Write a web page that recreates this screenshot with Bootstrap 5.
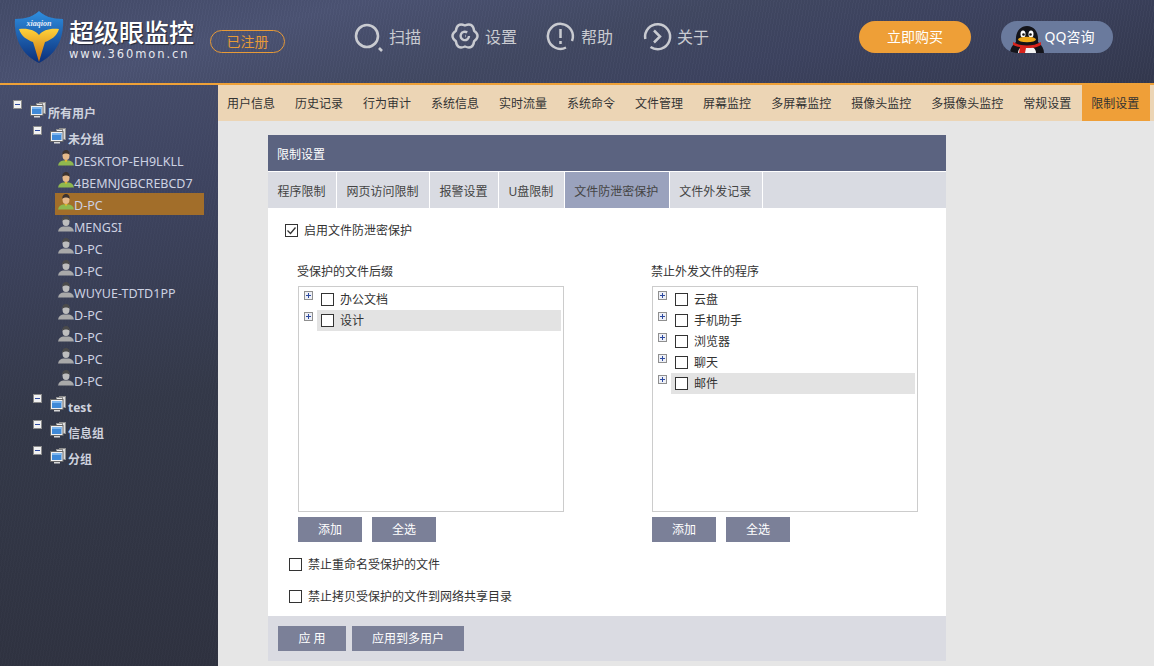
<!DOCTYPE html>
<html lang="zh-CN">
<head>
    <meta charset="UTF-8">
    <meta name="viewport" content="width=device-width, initial-scale=1.0">
    <title>超级眼监控</title>
    <link href="https://cdn.jsdelivr.net/npm/bootstrap@5.3.3/dist/css/bootstrap.min.css" rel="stylesheet">
    <style>
        html, body { height: 100%; }
        body {
            margin: 0;
            overflow: hidden;
            background: #e6e6e6;
            font-family: "Noto Sans", "Noto Sans CJK SC", sans-serif;
            font-size: 12px;
            color: #333;
        }
        .page-shell { width: 1154px; height: 666px; }

        /* header */
        .top-bar {
            height: 85px;
            border-bottom: 2px solid #efa137;
            background:
                repeating-linear-gradient(100deg, rgba(255,255,255,.018) 0 1px, rgba(0,0,0,.018) 1px 3px),
                linear-gradient(165deg, #434b69 0%, #4b5373 25%, #414862 50%, #3d4360 68%, #33384e 100%);
        }
        .brand-mark { margin: 11px 0 0 14px; width: 50px; height: 52px; }
        .brand-text { margin: 17px 0 0 5px; width: 126px; color: #fff; }
        .brand-name { font-size: 25px; line-height: 30px; font-weight: 500; white-space: nowrap; text-shadow: 1px 1px 1px rgba(0,0,0,.5); }
        .brand-url { font-family: "DejaVu Sans", sans-serif; font-size: 11.5px; line-height: 14px; letter-spacing: 1.92px; color: #e6e8ee; white-space: nowrap; }
        .reg-pill {
            margin: 30px 0 0 15px;
            width: 75px; height: 23px;
            border: 1px solid #e79a37;
            border-radius: 12px;
            color: #e79a37;
            font-size: 14px; line-height: 21px; text-align: center;
        }
        .top-menu { margin: 21px 0 0 70px; }
        .top-link { width: 96px; height: 32px; color: #c9cbd1; font-size: 16px; gap: 6px; }
        .top-link svg { flex: none; overflow: visible; }
        .pill-btn {
            width: 112px; height: 32px; margin-top: 21px;
            border-radius: 16px;
            color: #fff; font-size: 14px; line-height: 32px; text-align: center;
        }
        .pill-buy { background: #ee9f37; margin-left: 120px; }
        .pill-qq { background: #6a7a9d; margin-left: 30px; padding-left: 25px; position: relative; overflow: hidden; }
        .pill-qq svg { position: absolute; left: 9px; top: 5px; }

        /* sidebar tree */
        .side-tree {
            width: 218px; flex: none;
            padding-top: 15px;
            color: #cfd3df;
            background:
                repeating-linear-gradient(100deg, rgba(255,255,255,.012) 0 1px, rgba(0,0,0,.012) 1px 3px),
                linear-gradient(170deg, #474e6c 0%, #3e4460 22%, #343949 55%, #2f3240 100%);
        }
        .tree-row { display: flex; position: relative; align-items: center; white-space: nowrap; }
        .tree-group { height: 26px; font-weight: 700; color: #ced2de; }
        .tree-root { padding-left: 13px; }
        .tree-sub { padding-left: 33px; }
        .tree-group .toggle-box { align-self: flex-start; }
        .tree-group .pc-icon { margin: 2px 2px 0 8px; align-self: flex-start; }
        .tree-group .tree-label { margin-top: 1px; }
        .tree-first { height: 23px; }
        .tree-first .tree-label { margin-top: 4px; }
        .tree-after { margin-top: 3px; }
        .tree-leaf { height: 22px; margin-left: 55px; width: 149px; font-size: 12.5px; color: #cdd2e2; }
        .tree-leaf.is-picked { background: #a26e2a; }
        .tree-leaf svg { margin: 1px 0 0 3px; flex: none; align-self: flex-start; }
        .tree-leaf span { margin-top: 4px; }
        .toggle-box {
            width: 9px; height: 9px; flex: none;
            background: #f2f2f2; border: 1px solid #8b8b8b;
            display: flex; align-items: center; justify-content: center;
        }
        .toggle-box::after { content: ""; width: 5px; height: 1px; background: #2d4aa0; }

        /* tabs over the content */
        .main-area { min-width: 0; }
        .func-tabs { height: 36px; background: #ecd5b5; padding-right: 4px; color: #333; }
        .func-tab { padding: 0 10px; line-height: 38px; white-space: nowrap; }
        .func-tab:first-child { margin-left: -1px; }
        .func-tab.is-active { background: #ef9f38; margin-left: 1px; padding: 0 11px 0 9px; }

        /* settings panel */
        .set-panel { width: 678px; margin: 14px 0 0 50px; background: #fff; }
        .panel-title { height: 36px; background: #5b6380; color: #fff; padding-left: 9px; line-height: 40px; margin-bottom: 1px; }
        .panel-tabs { height: 36px; background: #d9dbe2; }
        .panel-tab { padding: 0 10.5px 0 9.5px; line-height: 40px; color: #444; border-right: 1px solid #fff; white-space: nowrap; }
        .panel-tab.is-active { background: #9aa2bd; }
        .panel-body { height: 408px; padding: 16px 0 0 17px; position: relative; }
        .check-line { height: 13px; gap: 6px; color: #333; }
        .form-check-input.square-check {
            width: 13px; height: 13px; margin: 0; flex: none;
            border: 1px solid #333; border-radius: 0; background-color: #fff;
            box-shadow: none;
        }
        .form-check-input.square-check:checked {
            background-color: #fff;
            background-image: url("data:image/svg+xml,%3csvg xmlns='http://www.w3.org/2000/svg' viewBox='0 0 13 13'%3e%3cpath fill='none' stroke='%23333' stroke-width='1.3' d='M2.500 6.500l3 3 5-6'/%3e%3c/svg%3e");
            background-size: 13px 13px;
        }
        .list-cols { margin: 27px 0 0 13px; gap: 88px; }
        .list-col { width: 266px; }
        .list-title { line-height: 16px; margin-bottom: 6px; margin-left: -1px; color: #333; }
        .list-frame { height: 226px; border: 1px solid #ccc; padding: 2px 2px 0 5px; }
        .list-row { height: 21px; }
        .plus-box {
            width: 9px; height: 9px; flex: none; margin: 2px 4px 0 0; align-self: flex-start;
            border: 1px solid #8f8f8f; background: #eef0f6; position: relative;
        }
        .plus-box::before { content: ""; position: absolute; left: 1px; top: 3px; width: 5px; height: 1px; background: #2d4aa0; }
        .plus-box::after { content: ""; position: absolute; left: 3px; top: 1px; width: 1px; height: 5px; background: #2d4aa0; }
        .row-body { flex: 1; height: 21px; gap: 6px; padding-left: 4px; color: #333; }
        .row-body.is-hot { background: #e3e3e3; }
        .flat-btn {
            border: 0; border-radius: 0; padding: 0;
            background: #7b8098; color: #fff;
            font-size: 12px; height: 25px; line-height: 25px; width: 64px;
        }
        .flat-btn:hover { background: #7b8098; color: #fff; }
        .foot-apply { width: 68px; }
        .foot-multi { width: 112px; }
        .list-actions { margin-top: 5px; gap: 10px; }
        .lower-check { margin: 16px 0 0 4px; }
        .lower-check + .lower-check { margin-top: 19px; }
        .panel-foot { height: 45px; background: #dadbe2; padding: 10px 0 0 10px; gap: 6px; }
    </style>
</head>
<body>
    <svg width="0" height="0" class="position-absolute">
        <symbol id="pc" viewBox="0 0 16 16">
            <rect x="9.500" y="0.500" width="6" height="11" fill="#dcdcdc" stroke="#8d8d8d"/>
            <rect x="6.500" y="1.500" width="6" height="3" fill="#eee" stroke="#8d8d8d"/>
            <rect x="0.500" y="3.500" width="12.500" height="10" fill="#f1f1f1" stroke="#666"/>
            <rect x="2" y="5" width="9.500" height="7" fill="#3f8ad8"/>
            <rect x="2" y="5" width="9.500" height="2" fill="#7db6ee"/>
            <rect x="4" y="14" width="6" height="1.500" fill="#d8d8d8"/>
        </symbol>
        <symbol id="man-on" viewBox="0 0 16 16">
            <path d="M0 15.500c.5-3 2.500-4.500 5-5h6c2.500.5 4.500 2 5 5z" fill="#8fb84f"/>
            <ellipse cx="8" cy="5.500" rx="3.500" ry="4.500" fill="#e6b98a"/>
            <path d="M4.300 5C4 1.500 6 0 8 0s4 1.500 3.700 5C10.500 3 5.500 3 4.300 5z" fill="#3d3330"/>
            <path d="M6.500 10h3l-1.500 2.500z" fill="#e3b92c"/>
        </symbol>
        <symbol id="man-off" viewBox="0 0 16 16">
            <path d="M0 15.500c.5-3 2.500-4.500 5-5h6c2.500.5 4.500 2 5 5z" fill="#a9a9a9"/>
            <ellipse cx="8" cy="5.500" rx="3.500" ry="4.500" fill="#bdbdbd"/>
            <path d="M4.300 5C4 1.500 6 0 8 0s4 1.500 3.700 5C10.500 3 5.500 3 4.300 5z" fill="#4a4a4a"/>
        </symbol>
    </svg>

    <div class="page-shell d-flex flex-column">
        <header class="top-bar d-flex flex-none">
            <svg class="brand-mark" viewBox="0 0 50 52">
                <defs>
                    <linearGradient id="shieldFill" x1="0" y1="0" x2="0" y2="1">
                        <stop offset="0" stop-color="#2f8fe0"/>
                        <stop offset="1" stop-color="#0b2f7a"/>
                    </linearGradient>
                    <linearGradient id="wingFill" x1="0" y1="0" x2="0" y2="1">
                        <stop offset="0" stop-color="#ffd23a"/>
                        <stop offset="1" stop-color="#c96f10"/>
                    </linearGradient>
                </defs>
                <path d="M25 0c5 5 13 8 24 8 1 19-6 35-24 44C7 43 0 27 1 8c11 0 19-3 24-8z" fill="url(#shieldFill)"/>
                <path d="M5 18c9-1 16 1 20 6 4-5 11-7 20-6-2 7-8 11-14 13-2 6-4 13-6 20-2-7-4-14-6-20C13 29 7 25 5 18z" fill="url(#wingFill)"/>
                <text x="25" y="15" text-anchor="middle" font-family="Liberation Serif, serif" font-size="8" font-weight="700" font-style="italic" fill="#e8eef8">xiaqion</text>
            </svg>
            <div class="brand-text">
                <div class="brand-name">超级眼监控</div>
                <div class="brand-url">www.360mon.cn</div>
            </div>
            <div class="reg-pill">已注册</div>
            <nav class="top-menu d-flex">
                <a class="top-link d-flex align-items-center text-decoration-none">
                    <svg width="28" height="32" viewBox="0 0 28 32" fill="none" stroke="#c9cbd1">
                        <circle cx="12" cy="15" r="11" stroke-width="2.600"/>
                        <path d="M24 27l3 3" stroke-width="2.600"/>
                    </svg>
                    <span>扫描</span>
                </a>
                <a class="top-link d-flex align-items-center text-decoration-none">
                    <svg width="28" height="32" viewBox="0 0 28 32" fill="none" stroke="#c9cbd1" stroke-width="2.400" stroke-linejoin="round">
                        <path d="M23.100 9.750Q30 15 23.100 20.250Q22 28.900 14 25.500Q6 28.900 4.900 20.250Q-2 15 4.900 9.750Q6 1.100 14 4.500Q22 1.100 23.100 9.750Z"/>
                        <path d="M18 15a4.200 4.200 0 1 1-1.800-3.500"/>
                        <path d="M14 15h.6"/>
                    </svg>
                    <span>设置</span>
                </a>
                <a class="top-link d-flex align-items-center text-decoration-none">
                    <svg width="28" height="32" viewBox="0 0 28 32" fill="none" stroke="#c9cbd1" stroke-width="2.500">
                        <path d="M19 26.500A12.500 12.500 0 1 1 25 20"/>
                        <path d="M13.500 8v9M13.500 20v3"/>
                    </svg>
                    <span>帮助</span>
                </a>
                <a class="top-link d-flex align-items-center text-decoration-none">
                    <svg width="28" height="32" viewBox="0 0 28 32" fill="none" stroke="#c9cbd1" stroke-width="2.500">
                        <path d="M2.300 18A12.500 12.500 0 1 1 7.500 26"/>
                        <path d="M11 9.500l6 6-6 6"/>
                    </svg>
                    <span>关于</span>
                </a>
            </nav>
            <a class="pill-btn pill-buy text-decoration-none">立即购买</a>
            <a class="pill-btn pill-qq text-decoration-none">
                <svg width="34" height="27" viewBox="0 0 34 27">
                    <path d="M0 27c0-4 2-8 6-11C5 6 10 0 17 0s12 6 11 16c4 3 6 7 6 11z" fill="#14141a"/>
                    <path d="M8 27c0-4 3-7 9-7s9 3 9 7z" fill="#f4f4f4"/>
                    <ellipse cx="13" cy="8" rx="2.500" ry="3.500" fill="#fff"/>
                    <ellipse cx="21" cy="8" rx="2.500" ry="3.500" fill="#fff"/>
                    <circle cx="13.500" cy="8.500" r="1.300" fill="#111"/>
                    <circle cx="20.500" cy="8.500" r="1.300" fill="#111"/>
                    <ellipse cx="17" cy="13.500" rx="9" ry="2.800" fill="#f0a818"/>
                    <path d="M3 16c4 2.500 9 3.500 14 3.500s10-1 14-3.500l0 3c-3 2-7 3-10 3H16l-1 5H9l1-6c-3-.5-5-1-7-2z" fill="#d8231c"/>
                </svg>
                QQ咨询
            </a>
        </header>

        <div class="d-flex flex-grow-1">
            <aside class="side-tree">
                <div class="tree-row tree-group tree-root">
                    <span class="toggle-box"></span>
                    <svg class="pc-icon" width="16" height="16"><use href="#pc"/></svg>
                    <span class="tree-label">所有用户</span>
                </div>
                <div class="tree-row tree-group tree-sub tree-first">
                    <span class="toggle-box"></span>
                    <svg class="pc-icon" width="16" height="16"><use href="#pc"/></svg>
                    <span class="tree-label">未分组</span>
                </div>
                <div id="leafRows"></div>
                <div class="tree-row tree-group tree-sub tree-after"><span class="toggle-box"></span><svg class="pc-icon" width="16" height="16"><use href="#pc"/></svg><span class="tree-label">test</span></div>
                <div class="tree-row tree-group tree-sub"><span class="toggle-box"></span><svg class="pc-icon" width="16" height="16"><use href="#pc"/></svg><span class="tree-label">信息组</span></div>
                <div class="tree-row tree-group tree-sub"><span class="toggle-box"></span><svg class="pc-icon" width="16" height="16"><use href="#pc"/></svg><span class="tree-label">分组</span></div>
            </aside>

            <main class="main-area flex-grow-1">
                <div class="func-tabs d-flex">
                    <span class="func-tab">用户信息</span>
                    <span class="func-tab">历史记录</span>
                    <span class="func-tab">行为审计</span>
                    <span class="func-tab">系统信息</span>
                    <span class="func-tab">实时流量</span>
                    <span class="func-tab">系统命令</span>
                    <span class="func-tab">文件管理</span>
                    <span class="func-tab">屏幕监控</span>
                    <span class="func-tab">多屏幕监控</span>
                    <span class="func-tab">摄像头监控</span>
                    <span class="func-tab">多摄像头监控</span>
                    <span class="func-tab">常规设置</span>
                    <span class="func-tab is-active">限制设置</span>
                </div>

                <section class="set-panel">
                    <div class="panel-title">限制设置</div>
                    <div class="panel-tabs d-flex">
                        <span class="panel-tab">程序限制</span>
                        <span class="panel-tab">网页访问限制</span>
                        <span class="panel-tab">报警设置</span>
                        <span class="panel-tab">U盘限制</span>
                        <span class="panel-tab is-active">文件防泄密保护</span>
                        <span class="panel-tab">文件外发记录</span>
                    </div>
                    <div class="panel-body">
                        <label class="check-line d-flex align-items-center">
                            <input class="form-check-input square-check" type="checkbox" checked>
                            <span>启用文件防泄密保护</span>
                        </label>
                        <div class="list-cols d-flex">
                            <div class="list-col">
                                <div class="list-title">受保护的文件后缀</div>
                                <div class="list-frame" id="listLeft"></div>
                                <div class="list-actions d-flex">
                                    <button class="btn flat-btn">添加</button>
                                    <button class="btn flat-btn">全选</button>
                                </div>
                            </div>
                            <div class="list-col">
                                <div class="list-title">禁止外发文件的程序</div>
                                <div class="list-frame" id="listRight"></div>
                                <div class="list-actions d-flex">
                                    <button class="btn flat-btn">添加</button>
                                    <button class="btn flat-btn">全选</button>
                                </div>
                            </div>
                        </div>
                        <label class="check-line lower-check d-flex align-items-center">
                            <input class="form-check-input square-check" type="checkbox">
                            <span>禁止重命名受保护的文件</span>
                        </label>
                        <label class="check-line lower-check d-flex align-items-center">
                            <input class="form-check-input square-check" type="checkbox">
                            <span>禁止拷贝受保护的文件到网络共享目录</span>
                        </label>
                    </div>
                    <div class="panel-foot d-flex">
                        <button class="btn flat-btn foot-apply">应 用</button>
                        <button class="btn flat-btn foot-multi">应用到多用户</button>
                    </div>
                </section>
            </main>
        </div>
    </div>

    <script src="https://cdn.jsdelivr.net/npm/bootstrap@5.3.3/dist/js/bootstrap.bundle.min.js"></script>
    <script>
        const leaves = [
            ['DESKTOP-EH9LKLL', 1], ['4BEMNJGBCREBCD7', 1], ['D-PC', 1, 1], ['MENGSI', 0],
            ['D-PC', 0], ['D-PC', 0], ['WUYUE-TDTD1PP', 0], ['D-PC', 0], ['D-PC', 0], ['D-PC', 0], ['D-PC', 0]
        ];
        document.getElementById('leafRows').innerHTML = leaves.map(function (l) {
            return '<div class="tree-row tree-leaf' + (l[2] ? ' is-picked' : '') + '">' +
                '<svg width="16" height="16"><use href="#' + (l[1] ? 'man-on' : 'man-off') + '"/></svg>' +
                '<span>' + l[0] + '</span></div>';
        }).join('');

        function fillList(id, names) {
            document.getElementById(id).innerHTML = names.map(function (n, i) {
                const hot = i === names.length - 1 ? ' is-hot' : '';
                return '<div class="list-row d-flex"><span class="plus-box"></span>' +
                    '<div class="row-body d-flex align-items-center' + hot + '">' +
                    '<input class="form-check-input square-check" type="checkbox"><span>' + n + '</span></div></div>';
            }).join('');
        }
        fillList('listLeft', ['办公文档', '设计']);
        fillList('listRight', ['云盘', '手机助手', '浏览器', '聊天', '邮件']);
    </script>
</body>
</html>
